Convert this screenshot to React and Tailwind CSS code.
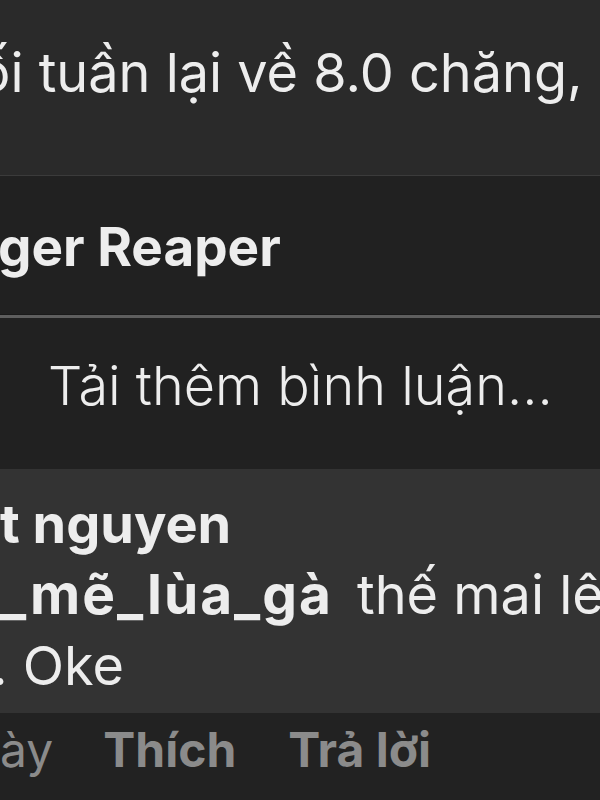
export default function App() {
  const font = { fontFamily: "Inter, 'Liberation Sans', sans-serif" };
  return (
    <div className="w-[600px] h-[800px] overflow-hidden flex flex-col bg-[#212121] text-[#ededed]" style={font}>
      <div className="h-[175px] shrink-0 bg-[#2a2a2a] pt-[46px] overflow-hidden">
        <div className="whitespace-nowrap text-[54px] leading-[54px] -ml-[22px]">ối tuần lại về 8.0 chăng, đ</div>
      </div>
      <div className="h-px shrink-0 bg-[#3b3b3b]" />
      <div className="h-[138px] shrink-0 bg-[#212121] pt-[45px] overflow-hidden">
        <div className="whitespace-nowrap text-[53px] leading-[53px] font-bold -ml-[2px]">ger Reaper</div>
      </div>
      <div className="h-px shrink-0 bg-[#1a1a1a]" />
      <div className="h-[3px] shrink-0 bg-[#5e5e5e]" />
      <div className="h-[151px] shrink-0 bg-[#212121] pt-[41px] overflow-hidden">
        <div className="whitespace-nowrap text-[54px] leading-[54px] font-light pl-[48px]">Tải thêm bình luận...</div>
      </div>
      <div className="h-[244px] shrink-0 bg-[#333333] pt-[19px] overflow-hidden">
        <div className="whitespace-nowrap text-[54px] leading-[71px] font-bold">t nguyen</div>
        <div className="whitespace-nowrap text-[54px] leading-[71px]">
          <span className="font-bold text-[55px] tracking-[2px]">_mẽ_lùa_gà</span>
          <span className="ml-[24px]">thế mai lên</span>
        </div>
        <div className="whitespace-nowrap text-[54px] leading-[71px] -ml-[8px]">. Oke</div>
      </div>
      <div className="flex-1 bg-[#222222] pt-[13px] overflow-hidden">
        <div className="whitespace-nowrap text-[48px] leading-[48px] text-[#8b8b8b] flex items-baseline">
          <span>ày</span>
          <span className="font-bold ml-[50px]">Thích</span>
          <span className="font-bold ml-[52px]">Trả lời</span>
        </div>
      </div>
    </div>
  );
}
